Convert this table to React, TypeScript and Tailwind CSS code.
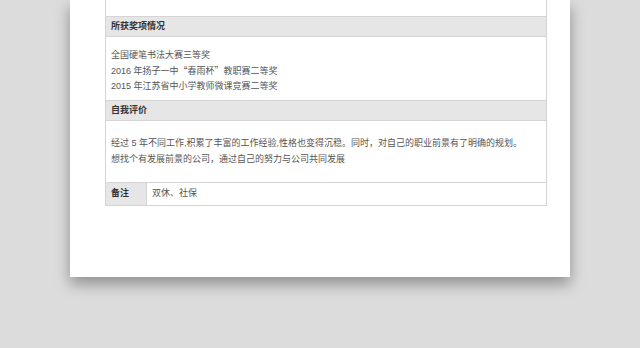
const font = {
  fontFamily: '"Liberation Sans", "Noto Sans CJK SC", sans-serif',
};

const Q = ({ c }: { c: string }) => (
  <span className="leading-none align-baseline [font-family:'Noto_Sans_CJK_SC',sans-serif] [font-feature-settings:'fwid']">{c}</span>
);

const SectionHeader = ({ title }: { title: string }) => (
  <div className="h-[20px] flex items-center px-[5px] bg-[#e6e6e6] border-b border-[#d4d4d4] text-[9px] font-bold text-[#333]">
    {title}
  </div>
);

const App = () => {
  return (
    <div className="w-[640px] h-[348px] bg-[#dcdcdc] overflow-hidden" style={font}>
      <div className="ml-[70px] w-[500px] h-[277px] bg-white shadow-[0_7px_14px_rgba(0,0,0,0.35)] pl-[35px] pr-[23px]">
        <div className="border-x border-b border-[#d4d4d4]">
          <div className="h-[17px] border-b border-[#d4d4d4]" />
          <SectionHeader title="所获奖项情况" />
          <div className="h-[64px] px-[5px] pt-[11px] text-[9px] leading-[15.5px] text-[#555] border-b border-[#d4d4d4]">
            <div className="h-[15.5px]">全国硬笔书法大赛三等奖</div>
            <div className="h-[15.5px]">
              2016 年扬子一中<Q c="“" />春雨杯<Q c="”" />教职赛二等奖
            </div>
            <div className="h-[15.5px]">2015 年江苏省中小学教师微课竞赛二等奖</div>
          </div>
          <SectionHeader title="自我评价" />
          <div className="h-[62px] px-[5px] pt-[14px] text-[9px] leading-[16px] text-[#555] border-b border-[#d4d4d4]">
            <div>经过 5 年不同工作,积累了丰富的工作经验,性格也变得沉稳。同时，对自己的职业前景有了明确的规划。</div>
            <div>想找个有发展前景的公司，通过自己的努力与公司共同发展</div>
          </div>
          <div className="flex h-[22px]">
            <div className="w-[41px] bg-[#e6e6e6] flex items-center px-[5px] text-[9px] font-bold text-[#333] border-r border-[#d4d4d4]">
              备注
            </div>
            <div className="flex-1 flex items-center px-[5px] text-[9px] text-[#555]">
              双休、社保
            </div>
          </div>
        </div>
      </div>
    </div>
  );
};

export default App;
